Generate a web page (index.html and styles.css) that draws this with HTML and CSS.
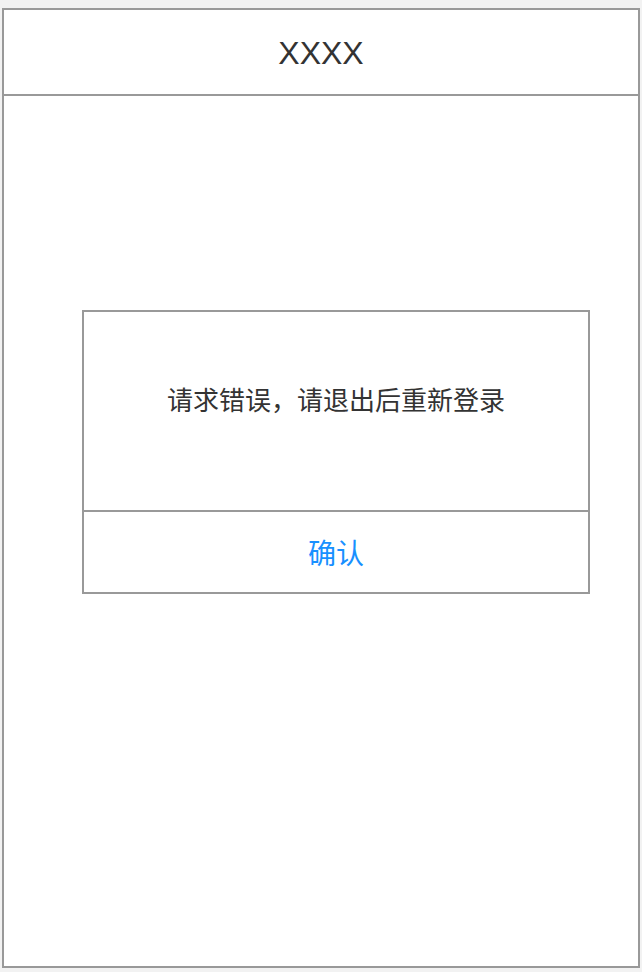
FILE: index.html
```html
<!DOCTYPE html>
<html lang="zh">
<head>
<meta charset="utf-8">
<title>XXXX</title>
<link rel="stylesheet" href="styles.css">
</head>
<body>
<div class="frame">
  <header class="topbar">XXXX</header>
  <main class="content">
    <div class="dialog">
      <div class="dialog-msg">请求错误，请退出后重新登录</div>
      <div class="dialog-btn">确认</div>
    </div>
  </main>
</div>
</body>
</html>
```

FILE: styles.css
```css
html, body {
  margin: 0;
  padding: 0;
}
body {
  background: #f2f2f2;
  font-family: "Liberation Sans", "Noto Sans CJK SC", sans-serif;
  color: #333;
}
.frame {
  margin: 8px 2px 4px 2px;
  height: 960px;
  box-sizing: border-box;
  border: 2px solid #999;
  background: #fff;
  display: flex;
  flex-direction: column;
}
.topbar {
  height: 82px;
  padding-top: 2px;
  border-bottom: 2px solid #999;
  display: flex;
  align-items: center;
  justify-content: center;
  font-size: 32px;
  color: #333;
}
.content {
  flex: 1;
  padding: 214px 48px 0 78px;
}
.dialog {
  border: 2px solid #999;
  display: flex;
  flex-direction: column;
}
.dialog-msg {
  height: 200px;
  box-sizing: border-box;
  padding-top: 72px;
  line-height: 30px;
  font-size: 26px;
  text-align: center;
  font-family: "Noto Sans CJK SC", sans-serif;
  color: #333;
  border-bottom: 2px solid #999;
}
.dialog-btn {
  height: 80px;
  line-height: 80px;
  text-align: center;
  font-size: 28px;
  font-family: "Noto Sans CJK SC", sans-serif;
  color: #1890ff;
}
```
